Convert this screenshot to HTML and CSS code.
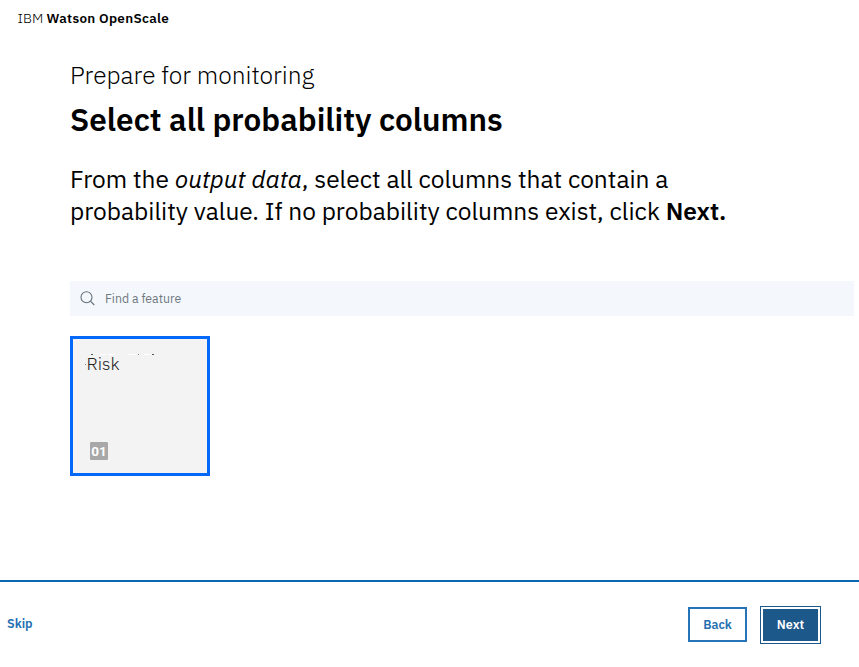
FILE: index.html
```
<!DOCTYPE html>
<html lang="en">
<head>
<meta charset="utf-8">
<title>IBM Watson OpenScale</title>
<link rel="stylesheet" href="styles.css">
</head>
<body>
<header class="brand">IBM <b>Watson OpenScale</b></header>
<main class="content">
  <p class="step">Prepare for monitoring</p>
  <h1 class="title">Select all probability columns</h1>
  <p class="lead">From the <i>output data</i>, select all columns that contain a<br>probability value. If no probability columns exist, click <b>Next.</b></p>
  <div class="search">
    <svg class="search-icon" width="16" height="16" viewBox="0 0 16 16" fill="none" stroke="#64717c" stroke-width="1.1"><circle cx="6.5" cy="6.2" r="5.5"/><path d="M10.4 10.1L14.3 14"/></svg>
    <span class="placeholder">Find a feature</span>
  </div>
  <div class="card">
    <svg class="specks" width="72" height="18" viewBox="0 0 72 18"><path d="M6 .5h2M67 .5h2" stroke="#555" stroke-width="1"/><path d="M15 .5h6M23 .5h7M43 .5h8M59 .5h6" stroke="#fff" stroke-width="1"/><path d="M53 .5h1M0 10.5h1" stroke="#888"/></svg>
    <span class="card-name">Risk</span>
    <span class="badge">01</span>
  </div>
</main>
<footer class="footer">
  <a class="skip">Skip</a>
  <div class="actions">
    <button class="btn back">Back</button>
    <button class="btn next">Next</button>
  </div>
</footer>
</body>
</html>
```
FILE: styles.css
```
* { box-sizing: border-box; margin: 0; padding: 0; }
body {
  width: 859px;
  height: 667px;
  overflow: hidden;
  display: flex;
  flex-direction: column;
  background: #fff;
  color: #000;
  font-family: "IBM Plex Sans", Roboto, sans-serif;
}
.brand { height: 36px; padding-left: 17.5px; font-size: 14px; line-height: 36px; font-weight: 300; white-space: nowrap; }
.brand b { font-size: 13.5px; letter-spacing: 0.3px; font-weight: 600; }
.content { flex: 1; padding: 23px 5px 0 70px; }
.step { font-size: 24.5px; line-height: 32px; font-weight: 300; }
.title { margin-top: 9px; font-size: 31.5px; line-height: 40px; font-weight: 600; white-space: nowrap; }
.lead { margin-top: 23px; font-size: 24.5px; line-height: 32px; font-weight: 400; white-space: nowrap; }
.lead b { font-weight: 600; }
.search { margin-top: 54px; height: 35px; background: #f4f7fc; display: flex; align-items: center; }
.search-icon { margin-left: 10px; }
.placeholder { margin: -2px 0 0 9px; font-size: 12.3px; line-height: 18px; color: #6f7880; }
.card { position: relative; margin-top: 20px; width: 140px; height: 140px; border: 3px solid #0468fb; background: #f3f3f3; padding: 13px 0 15px 13.5px; display: flex; flex-direction: column; justify-content: space-between; align-items: flex-start; }
.specks { position: absolute; left: 12px; top: 15px; }
.card-name { font-size: 17.7px; line-height: 24px; font-weight: 300; color: #222; }
.badge { margin: 0 0 -2px 3.5px; width: 18px; height: 18px; border-radius: 1px; background: #a8a8a8; color: #fff; font-family: Roboto, sans-serif; font-size: 13.5px; line-height: 19px; font-weight: 700; text-align: center; }
.footer { flex: 0 0 87px; border-top: 2px solid #0b67b0; display: flex; justify-content: space-between; padding: 24px 38px 0 7px; }
.skip { font-size: 12.5px; line-height: 35px; font-weight: 600; color: #2570b2; }
.actions { display: flex; gap: 13px; }
.btn { font-family: inherit; font-size: 12.5px; font-weight: 600; line-height: 16px; text-align: center; }
.back { width: 59px; height: 35px; margin-top: 1px; border: 2px solid #2574b8; background: #fff; color: #2570b2; }
.next { width: 61px; height: 38px; border: 1px solid #1d588b; background: #1d588b; box-shadow: inset 0 0 0 2px #fff; color: #fff; }
.back, .next { padding-bottom: 2px; }
```
